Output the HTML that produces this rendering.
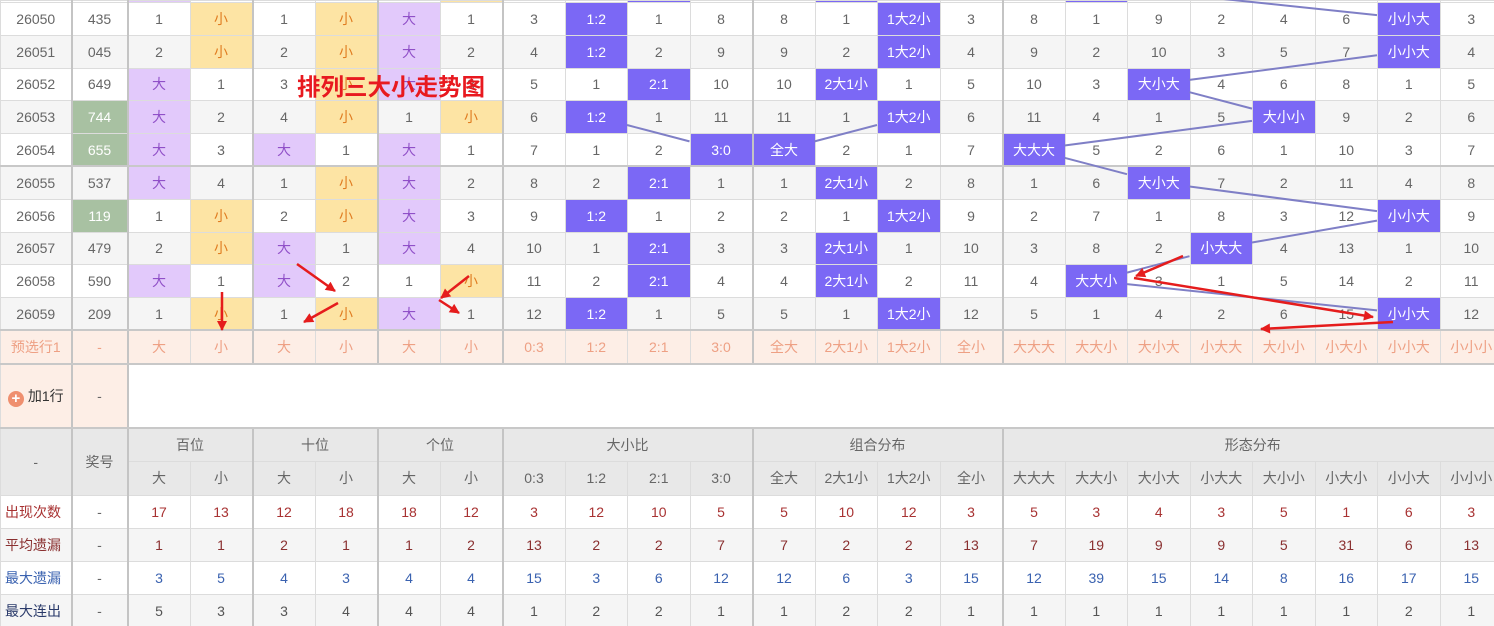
<!DOCTYPE html>
<html><head><meta charset="utf-8">
<style>
html,body{margin:0;padding:0;width:1494px;height:626px;overflow:hidden;background:#fff;}
body{position:relative;font-family:"Liberation Sans","Noto Sans CJK SC",sans-serif;}
table{position:absolute;left:0;top:0;width:1502px;table-layout:fixed;border-collapse:collapse;font-size:14px;color:#666;}
td{border:1px solid #dcdcdc;text-align:center;padding:0;white-space:nowrap;overflow:hidden;}
tr.d{height:32.8px;}
tr.z td{background:#f5f5f5;}
tr.tk td{border-bottom:2px solid #c8c8c8;}
td.p,tr.z td.p{background:#e2c9fb;color:#9050c8;}
td.y,tr.z td.y{background:#fde4a4;color:#e07c20;}
td.b,tr.z td.b{background:#7b68f5;color:#fff;}
td.gr,tr.z td.gr{background:#a8c1a2;color:#fff;}
tr.pre td{background:#fdeee6;color:#eea084;height:32px;border-bottom:2px solid #c8c8c8;}
tr.add td{height:62px;border-bottom:2px solid #c8c8c8;}
tr.h td{background:#e8e8e8;color:#666;}
tr.s td{height:32px;}
tr.s2 td{background:#f5f5f5;}
.r1 td{color:#a83232;} .r2 td{color:#8a3030;} .r3 td{color:#3a62b0;} .r4 td{color:#555;}
.r4 td.l{color:#2a3a6a;}
td.l{text-align:left;padding-left:4px;}
#title{position:absolute;left:297px;top:68px;font-size:23.5px;font-weight:bold;color:#e8191f;letter-spacing:0;}
svg{position:absolute;left:0;top:0;}
</style></head><body>
<table>
<colgroup>
<col style="width:71px">
<col style="width:56px;border-left:2px solid #c4c4c4">
<col style="width:62.5px;border-left:2px solid #c4c4c4"><col style="width:62.5px">
<col style="width:62.5px;border-left:2px solid #c4c4c4"><col style="width:62.5px">
<col style="width:62.5px;border-left:2px solid #c4c4c4"><col style="width:62.5px">
<col style="width:62.5px;border-left:2px solid #c4c4c4"><col style="width:62.5px"><col style="width:62.5px"><col style="width:62.5px">
<col style="width:62.5px;border-left:2px solid #c4c4c4"><col style="width:62.5px"><col style="width:62.5px"><col style="width:62.5px">
<col style="width:62.5px;border-left:2px solid #c4c4c4"><col style="width:62.5px"><col style="width:62.5px"><col style="width:62.5px"><col style="width:62.5px"><col style="width:62.5px"><col style="width:62.5px"><col style="width:62.5px">
</colgroup>
<tr style="height:2px;font-size:0;line-height:0"><td></td><td></td><td class="p"></td><td></td><td></td><td></td><td></td><td class="y"></td><td></td><td></td><td class="b"></td><td></td><td></td><td class="b"></td><td></td><td></td><td></td><td class="b"></td><td></td><td></td><td></td><td></td><td></td><td></td></tr>
<tr class="d"><td>26050</td><td>435</td><td>1</td><td class="y">小</td><td>1</td><td class="y">小</td><td class="p">大</td><td>1</td><td>3</td><td class="b">1:2</td><td>1</td><td>8</td><td>8</td><td>1</td><td class="b">1大2小</td><td>3</td><td>8</td><td>1</td><td>9</td><td>2</td><td>4</td><td>6</td><td class="b">小小大</td><td>3</td></tr>
<tr class="d z"><td>26051</td><td>045</td><td>2</td><td class="y">小</td><td>2</td><td class="y">小</td><td class="p">大</td><td>2</td><td>4</td><td class="b">1:2</td><td>2</td><td>9</td><td>9</td><td>2</td><td class="b">1大2小</td><td>4</td><td>9</td><td>2</td><td>10</td><td>3</td><td>5</td><td>7</td><td class="b">小小大</td><td>4</td></tr>
<tr class="d"><td>26052</td><td>649</td><td class="p">大</td><td>1</td><td>3</td><td class="y">小</td><td class="p">大</td><td>3</td><td>5</td><td>1</td><td class="b">2:1</td><td>10</td><td>10</td><td class="b">2大1小</td><td>1</td><td>5</td><td>10</td><td>3</td><td class="b">大小大</td><td>4</td><td>6</td><td>8</td><td>1</td><td>5</td></tr>
<tr class="d z"><td>26053</td><td class="gr">744</td><td class="p">大</td><td>2</td><td>4</td><td class="y">小</td><td>1</td><td class="y">小</td><td>6</td><td class="b">1:2</td><td>1</td><td>11</td><td>11</td><td>1</td><td class="b">1大2小</td><td>6</td><td>11</td><td>4</td><td>1</td><td>5</td><td class="b">大小小</td><td>9</td><td>2</td><td>6</td></tr>
<tr class="d tk"><td>26054</td><td class="gr">655</td><td class="p">大</td><td>3</td><td class="p">大</td><td>1</td><td class="p">大</td><td>1</td><td>7</td><td>1</td><td>2</td><td class="b">3:0</td><td class="b">全大</td><td>2</td><td>1</td><td>7</td><td class="b">大大大</td><td>5</td><td>2</td><td>6</td><td>1</td><td>10</td><td>3</td><td>7</td></tr>
<tr class="d z"><td>26055</td><td>537</td><td class="p">大</td><td>4</td><td>1</td><td class="y">小</td><td class="p">大</td><td>2</td><td>8</td><td>2</td><td class="b">2:1</td><td>1</td><td>1</td><td class="b">2大1小</td><td>2</td><td>8</td><td>1</td><td>6</td><td class="b">大小大</td><td>7</td><td>2</td><td>11</td><td>4</td><td>8</td></tr>
<tr class="d"><td>26056</td><td class="gr">119</td><td>1</td><td class="y">小</td><td>2</td><td class="y">小</td><td class="p">大</td><td>3</td><td>9</td><td class="b">1:2</td><td>1</td><td>2</td><td>2</td><td>1</td><td class="b">1大2小</td><td>9</td><td>2</td><td>7</td><td>1</td><td>8</td><td>3</td><td>12</td><td class="b">小小大</td><td>9</td></tr>
<tr class="d z"><td>26057</td><td>479</td><td>2</td><td class="y">小</td><td class="p">大</td><td>1</td><td class="p">大</td><td>4</td><td>10</td><td>1</td><td class="b">2:1</td><td>3</td><td>3</td><td class="b">2大1小</td><td>1</td><td>10</td><td>3</td><td>8</td><td>2</td><td class="b">小大大</td><td>4</td><td>13</td><td>1</td><td>10</td></tr>
<tr class="d"><td>26058</td><td>590</td><td class="p">大</td><td>1</td><td class="p">大</td><td>2</td><td>1</td><td class="y">小</td><td>11</td><td>2</td><td class="b">2:1</td><td>4</td><td>4</td><td class="b">2大1小</td><td>2</td><td>11</td><td>4</td><td class="b">大大小</td><td>3</td><td>1</td><td>5</td><td>14</td><td>2</td><td>11</td></tr>
<tr class="d z tk"><td>26059</td><td>209</td><td>1</td><td class="y">小</td><td>1</td><td class="y">小</td><td class="p">大</td><td>1</td><td>12</td><td class="b">1:2</td><td>1</td><td>5</td><td>5</td><td>1</td><td class="b">1大2小</td><td>12</td><td>5</td><td>1</td><td>4</td><td>2</td><td>6</td><td>15</td><td class="b">小小大</td><td>12</td></tr>
<tr class="pre"><td>预选行1</td><td>-</td><td>大</td><td>小</td><td>大</td><td>小</td><td>大</td><td>小</td><td>0:3</td><td>1:2</td><td>2:1</td><td>3:0</td><td>全大</td><td>2大1小</td><td>1大2小</td><td>全小</td><td>大大大</td><td>大大小</td><td>大小大</td><td>小大大</td><td>大小小</td><td>小大小</td><td>小小大</td><td>小小小</td></tr>
<tr class="add"><td style="background:#fdeee6;color:#333;font-size:14px"><span style="display:inline-block;width:16px;height:16px;border-radius:50%;background:#ef8f6f;color:#fff;font-size:15px;line-height:16px;font-weight:bold;vertical-align:-2px;margin-right:4px">+</span>加1行</td><td style="background:#fdeee6">-</td><td colspan="22" style="background:#fff;border-right:1px solid #dcdcdc"></td></tr>
<tr class="h" style="height:33px"><td rowspan="2">-</td><td rowspan="2">奖号</td><td colspan="2">百位</td><td colspan="2">十位</td><td colspan="2">个位</td><td colspan="4">大小比</td><td colspan="4">组合分布</td><td colspan="8">形态分布</td></tr>
<tr class="h" style="height:34px"><td>大</td><td>小</td><td>大</td><td>小</td><td>大</td><td>小</td><td>0:3</td><td>1:2</td><td>2:1</td><td>3:0</td><td>全大</td><td>2大1小</td><td>1大2小</td><td>全小</td><td>大大大</td><td>大大小</td><td>大小大</td><td>小大大</td><td>大小小</td><td>小大小</td><td>小小大</td><td>小小小</td></tr>
<tr class="s r1"><td class="l">出现次数</td><td style="color:#666">-</td><td>17</td><td>13</td><td>12</td><td>18</td><td>18</td><td>12</td><td>3</td><td>12</td><td>10</td><td>5</td><td>5</td><td>10</td><td>12</td><td>3</td><td>5</td><td>3</td><td>4</td><td>3</td><td>5</td><td>1</td><td>6</td><td>3</td></tr>
<tr class="s s2 r2"><td class="l">平均遗漏</td><td style="color:#666">-</td><td>1</td><td>1</td><td>2</td><td>1</td><td>1</td><td>2</td><td>13</td><td>2</td><td>2</td><td>7</td><td>7</td><td>2</td><td>2</td><td>13</td><td>7</td><td>19</td><td>9</td><td>9</td><td>5</td><td>31</td><td>6</td><td>13</td></tr>
<tr class="s r3"><td class="l">最大遗漏</td><td style="color:#666">-</td><td>3</td><td>5</td><td>4</td><td>3</td><td>4</td><td>4</td><td>15</td><td>3</td><td>6</td><td>12</td><td>12</td><td>6</td><td>3</td><td>15</td><td>12</td><td>39</td><td>15</td><td>14</td><td>8</td><td>16</td><td>17</td><td>15</td></tr>
<tr class="s s2 r4"><td class="l">最大连出</td><td style="color:#666">-</td><td>5</td><td>3</td><td>3</td><td>4</td><td>4</td><td>4</td><td>1</td><td>2</td><td>2</td><td>1</td><td>1</td><td>2</td><td>2</td><td>1</td><td>1</td><td>1</td><td>1</td><td>1</td><td>1</td><td>1</td><td>2</td><td>1</td></tr>
</table>
<div id="title">排列三大小走势图</div>
<svg id="ov" width="1494" height="626" viewBox="0 0 1494 626">
<defs><marker id="ah" viewBox="0 0 10 10" refX="9" refY="5" markerWidth="5" markerHeight="4" orient="auto"><path d="M0,0L10,5L0,10z" fill="#e51c1c"/></marker></defs>
<g id="lines" stroke="#7f7fc6" stroke-width="2" fill="none"></g>
<g stroke="#e51c1c" stroke-width="2.5" fill="none" marker-end="url(#ah)">
<line x1="222" y1="292" x2="222" y2="330"/>
<line x1="297" y1="264" x2="335" y2="291"/>
<line x1="338" y1="303" x2="304" y2="322"/>
<line x1="469" y1="276" x2="441" y2="298"/>
<line x1="439" y1="300" x2="459" y2="313"/>
<line x1="1183" y1="256" x2="1136" y2="276"/>
<line x1="1134" y1="278" x2="1373" y2="317"/>
<line x1="1393" y1="322" x2="1261" y2="329"/>
</g>
</svg>
<script>
(function(){
var g=document.getElementById('lines');
function cx(k){return 127+62.5*k+31.25;}
function cy(r){return 2+32.8*r+16.4;}
var seqs=[[8,7,7,8,7,9,8,7,8,8,7],[11,12,12,11,12,10,11,12,11,11,12],[15,20,20,16,18,14,16,20,17,15,20]];
var hw=31.25,hh=16.4;
seqs.forEach(function(s){
 for(var i=0;i<s.length-1;i++){
  var ax=cx(s[i]),ay=cy(i-1),bx=cx(s[i+1]),by=cy(i);
  var dx=bx-ax,dy=by-ay;
  if(dx===0)continue;
  var t=Math.min(hw/Math.abs(dx),hh/Math.abs(dy));
  if(t>=0.5)continue;
  var l=document.createElementNS('http://www.w3.org/2000/svg','line');
  l.setAttribute('x1',ax+dx*t);l.setAttribute('y1',ay+dy*t);
  l.setAttribute('x2',bx-dx*t);l.setAttribute('y2',by-dy*t);
  g.appendChild(l);
 }
});
})();
</script>
</body></html>
